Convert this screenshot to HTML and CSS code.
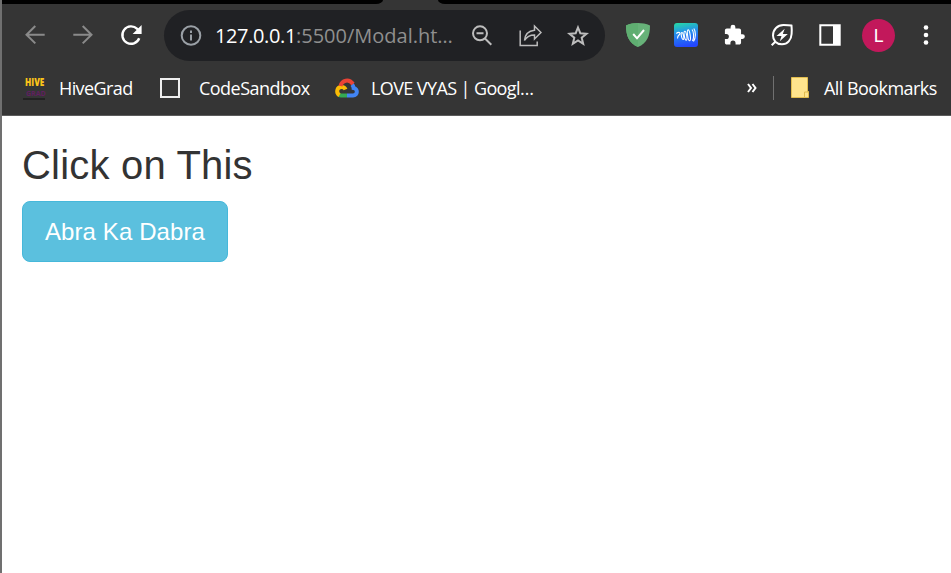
FILE: index.html
```html
<!DOCTYPE html>
<html lang="en">
<head>
<meta charset="utf-8">
<title>Modal</title>
<link rel="stylesheet" href="styles.css">
</head>
<body>
<div class="window">
  <div class="tabstrip"><div class="tab-end left"></div><div class="tab-end right"></div></div>
  <div class="toolbar">
    <svg class="icon back dim" viewBox="0 0 24 24"><path d="M21.700 11.700H4M12.300 3L3.500 11.700l8.800 8.700"/></svg>
    <svg class="icon forward dim" viewBox="0 0 24 24"><path d="M2.300 11.700H20M11.700 3l8.800 8.700-8.800 8.700"/></svg>
    <svg class="icon reload" viewBox="0 0 24 24"><path d="M20.200 15.200A8.700 8.700 0 1 1 18.200 5.900L21 8.600"/><path class="solid" d="M22.600 2v9h-9z"/></svg>
    <div class="omnibox">
      <svg class="icon info" viewBox="0 0 24 24"><circle cx="12" cy="12.500" r="9.300"/><path d="M12 11.500v6M12 7.500V10"/></svg>
      <div class="url"><span class="host">127.0.0.1</span><span class="path">:5500/Modal.ht…</span></div>
      <svg class="icon search" viewBox="0 0 24 24"><circle cx="10" cy="10.300" r="7"/><path d="M15 15.500l6.300 6.300M6.500 10.300h7"/></svg>
      <svg class="icon share" viewBox="0 0 24 24"><path d="M2.200 7.500v15h17V18.500M6.500 17.500C7 11.500 10 8 16.500 7.300V3l6.500 6.500-6.500 6.500v-4C11.500 12 8.500 14 6.500 17.500z"/></svg>
      <svg class="icon star" viewBox="0 0 24 24"><path d="M12 4.500l2.300 5.700 6.200.5-4.800 4 1.500 6.200-5.200-3.400-5.200 3.400 1.500-6.200-4.800-4 6.200-.5z"/></svg>
    </div>
    <svg class="icon shield" viewBox="0 0 24 24"><path fill="#67b279" d="M12 0c4 0 8 .8 12 2.400C24 13 21 20 12 24 3 20 0 13 0 2.400 4 .8 8 0 12 0z"/><path fill="#5fae71" d="M12 0v24C3 20 0 13 0 2.400 4 .8 8 0 12 0z"/><path d="M7.200 11l3.800 4.300 7-8.300" fill="none" stroke="#fff" stroke-width="2"/></svg>
    <svg class="icon wave" viewBox="0 0 24 24"><defs><linearGradient id="wave-bg" x1=".2" y1="0" x2=".4" y2="1"><stop stop-color="#25d6a8"/><stop offset=".4" stop-color="#2491eb"/><stop offset="1" stop-color="#2346ff"/></linearGradient></defs><rect width="24" height="24" rx="3" fill="url(#wave-bg)"/><g fill="none" stroke="#fff" stroke-width="1.100"><path d="M2.300 10.500c1.800-1.600 4-1.400 3.700.2-.2 1.300-2.500.9-2.500 4.800"/><ellipse cx="8.500" cy="13" rx="1.100" ry="3.500" transform="rotate(-12 8.500 13)"/><ellipse cx="11.500" cy="12.700" rx="1.200" ry="4.500" transform="rotate(-10 11.500 12.700)"/><ellipse cx="14.900" cy="12.300" rx="1.300" ry="5.500" transform="rotate(-8 14.900 12.300)"/><path d="M18 6.500c1.800 2 2.300 8 .5 11.500M19.800 5.500c2.200 3 2.200 9.500-.3 13"/></g></svg>
    <svg class="icon puzzle" viewBox="0 0 24 24"><path fill="#fff" transform="translate(1 .700) scale(.95)" d="M20.500 11H19V7c0-1.100-.9-2-2-2h-4V3.500a2.500 2.500 0 0 0-5 0V5H4c-1.100 0-2 .9-2 2v3.800h1.500a2.700 2.700 0 0 1 0 5.400H2V20c0 1.100.9 2 2 2h3.800v-1.500a2.700 2.700 0 0 1 5.400 0V22H17c1.100 0 2-.9 2-2v-4h1.500a2.500 2.500 0 0 0 0-5z"/></svg>
    <svg class="icon leaf" viewBox="0 0 24 24"><path d="M1.700 22.300l3.600-3.600M5.300 18.700A9 9 0 0 1 3 12.500C3 6.500 7.500 2 13.500 2c3 0 5.500.1 8 .6.3 2.700.3 5.600.1 8.400-.3 6-4.100 10.300-9.600 10.300-2.500 0-5-.9-6.700-2.600z"/><path class="solid" d="M14.700 5.800L6.500 13h5l-1.700 5.200 8-7.200h-5z"/></svg>
    <svg class="icon panel" viewBox="0 0 24 24"><path d="M2.300 2.300h19.400v19.400H2.300z"/><path class="solid" d="M15 2h7v20h-7z"/></svg>
    <div class="avatar">L</div>
    <svg class="icon dots" viewBox="0 0 8 24"><circle cx="4" cy="4.500" r="2.300"/><circle cx="4" cy="12" r="2.300"/><circle cx="4" cy="19.500" r="2.300"/></svg>
  </div>
  <div class="bookmarks">
    <div class="hive"><b>HIVE</b><i>GRAD</i><u></u></div>
    <span class="label l1">HiveGrad</span>
    <span class="square"></span>
    <span class="label l2">CodeSandbox</span>
    <svg class="cloud" viewBox="0 0 24 20"><g fill="none" stroke-width="4"><path stroke="#4285f4" d="M17 6.500c1 1 1.500 2 1.600 3.500 4.400.5 4.400 7.500-.6 7.500h-6"/><path stroke="#34a853" d="M12 17.500H6c-.8 0-1.500-.2-2-.5"/><path stroke="#fbbc05" d="M4.500 17.200C1 15 1.500 9 6.500 9c2 0 3.500 1 4 2.500"/><path stroke="#ea4335" d="M5.500 8C7 2 14 .5 18 6"/></g></svg>
    <span class="label l3">LOVE VYAS | Googl…</span>
    <svg class="more" viewBox="0 0 10 10"><path d="M1 1l3 4-3 4M5.500 1l3 4-3 4"/></svg>
    <span class="divider"></span>
    <svg class="folder" viewBox="0 0 18 22"><path fill="#ffe48d" d="M.5.500h16v14h1v6h-17z"/><path fill="none" stroke="#e2bd4f" d="M.5.500h16v14h1v6h-17zM13.500 20v-5h4"/></svg>
    <span class="label l4">All Bookmarks</span>
  </div>
  <main>
    <h2>Click on This</h2>
    <button>Abra Ka Dabra</button>
  </main>
</div>
</body>
</html>
```
FILE: styles.css
```css
* { box-sizing: border-box; }
body { margin: 0; background: #fff; overflow: hidden; }
.window { height: 573px; border-left: 2px solid #707070; }
.tabstrip { height: 4px; background: #353535; display: flex; justify-content: space-between; }
.tab-end { background: #000; height: 4px; }
.left { width: 381px; border-bottom-right-radius: 7px 4px; }
.right { width: 513px; border-bottom-left-radius: 7px 4px; }
.toolbar { height: 62px; background: #353535; display: flex; align-items: center; }
.icon { width: 24px; height: 24px; flex: none; fill: none; stroke: #fff; stroke-width: 2; }
.icon .solid { fill: #fff; stroke: none; }
.dim { stroke: #8a8a8a; }
.back { margin-left: 21px; }
.forward { margin-left: 24px; }
.reload { margin-left: 24px; stroke-width: 2.4; }
.omnibox { width: 441px; height: 51px; margin: 0 21px 0 21px; background: #202124; border-radius: 26px; display: flex; align-items: center; flex: none; }
.info { margin-left: 15px; stroke: #9aa0a6; }
.url { width: 239px; margin-left: 12px; flex: none; white-space: nowrap; font: 20px/28px "Open Sans", sans-serif; color: #8f8f8f; padding-top: 1px; }
.host { color: #fff; letter-spacing: -.38px; }
.path { letter-spacing: 0; }
.search, .share, .star { stroke: #bdbdbd; }
.search { margin-left: 16px; }
.share { margin-left: 24px; stroke-width: 1.5; }
.star { margin-left: 24px; }
.shield, .wave, .puzzle { stroke: none; }
.wave, .puzzle, .leaf, .panel { margin-left: 24px; }
.avatar { width: 33px; height: 33px; margin-left: 20px; border-radius: 50%; background: #c2185b; color: #fff; font: 18px/34px Roboto, sans-serif; text-align: center; flex: none; }
.dots { width: 8px; margin-left: 27px; fill: #fff; stroke: none; }
.bookmarks { height: 50px; background: #353535; border-bottom: 1px solid #5c5c5c; display: flex; align-items: center; padding: 0 0 6px 21px; }
.hive { width: 24px; height: 24px; display: flex; flex-direction: column; align-items: flex-start; font: bold 10px/13px "Open Sans", sans-serif; flex: none; }
.hive b { color: #fcc419; margin-left: 2px; transform: scaleX(.82); transform-origin: left; }
.hive i { color: #60205f; font-style: normal; font-size: 7px; line-height: 9px; margin-left: 3px; }
.hive u { width: 22px; height: 2px; background: #222; }
.label { color: #fff; font: 18px/24px "Open Sans", sans-serif; white-space: nowrap; flex: none; }
.l1 { width: 74px; margin-left: 12px; letter-spacing: -.6px; }
.square { width: 20px; height: 20px; border: 2px solid #eee; margin-left: 27px; }
.l2 { width: 112px; margin-left: 19px; letter-spacing: -.53px; }
.cloud { width: 24px; height: 20px; margin-left: 24px; }
.l3 { width: 164px; margin-left: 12px; letter-spacing: -.6px; }
.more { width: 10px; height: 10px; margin-left: 212px; fill: none; stroke: #fff; stroke-width: 2; }
.divider { width: 1px; height: 24px; background: #707070; margin-left: 16px; }
.folder { width: 18px; height: 22px; margin-left: 17px; }
.l4 { margin-left: 15px; letter-spacing: -.55px; }
main { padding: 27px 20px; }
h2 { margin: 0 0 14px; font: 40px/44px "Liberation Sans", Arial, sans-serif; letter-spacing: .2px; color: #333; }
button { display: block; width: 206px; height: 61px; padding: 0; border: 1px solid #46b8da; border-radius: 8px; background: #5bc0de; color: #fff; font: 24px/32px "Liberation Sans", Arial, sans-serif; letter-spacing: .1px; }
```
